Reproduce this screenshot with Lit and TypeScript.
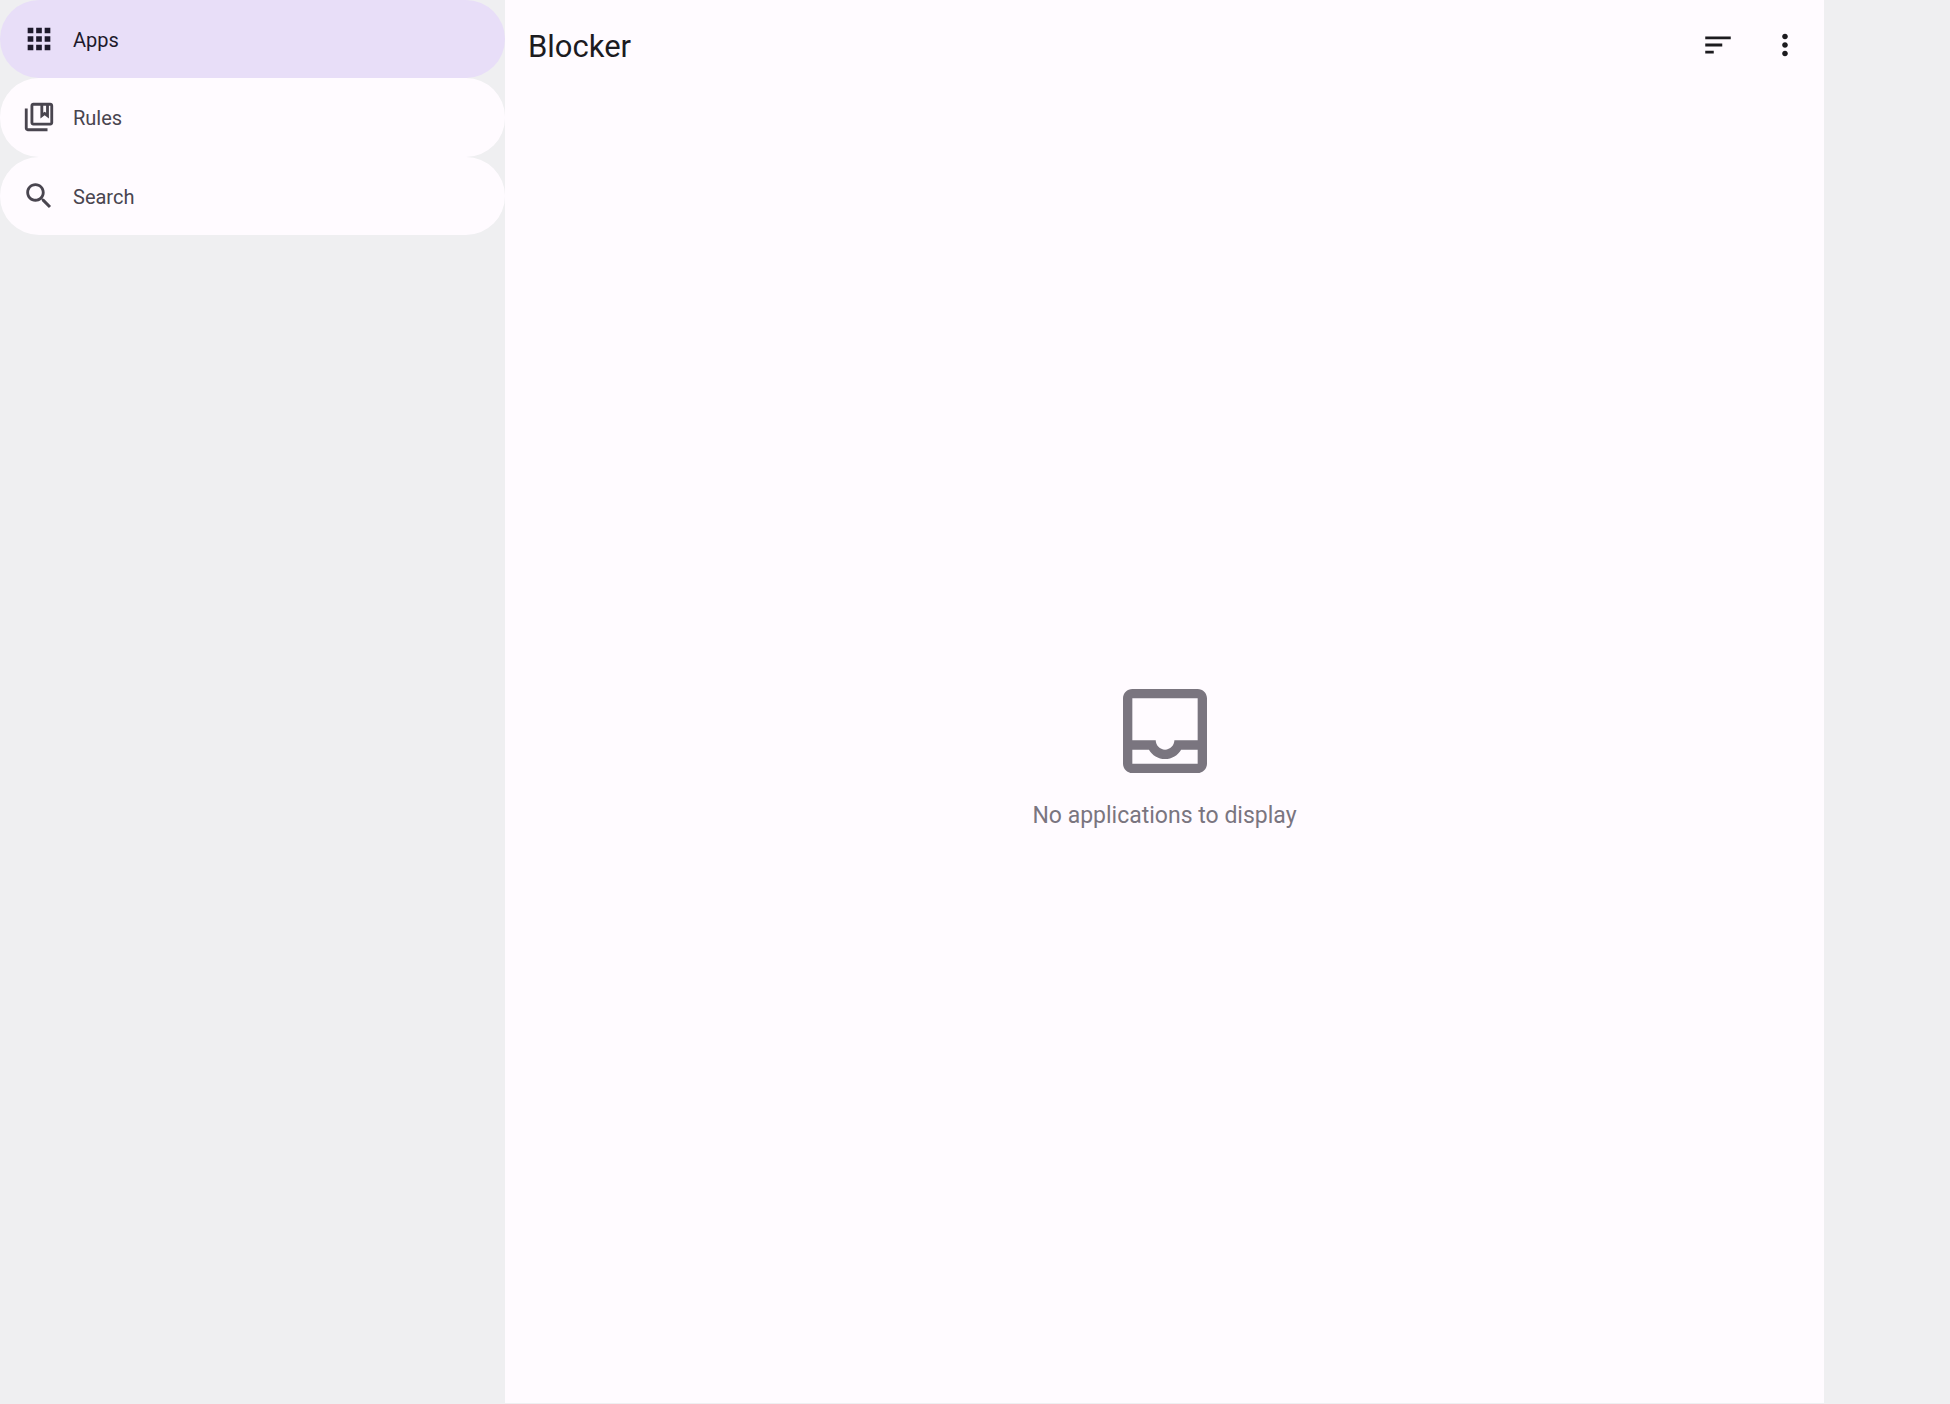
import { LitElement, html, css, svg } from "lit";
import { customElement, state } from "lit/decorators.js";

const icons = {
  apps: svg`<path d="M4 8h4V4H4v4zm6 12h4v-4h-4v4zm-6 0h4v-4H4v4zm0-6h4v-4H4v4zm6 0h4v-4h-4v4zm6-10v4h4V4h-4zm-6 4h4V4h-4v4zm6 6h4v-4h-4v4zm0 6h4v-4h-4v4z"/>`,
  rules: svg`<path d="M4 6H2v14c0 1.100.9 2 2 2h14v-2H4V6z"/><path fill-rule="evenodd" d="M20 2H8c-1.100 0-2 .9-2 2v12c0 1.100.9 2 2 2h12c1.100 0 2-.9 2-2V4c0-1.100-.9-2-2-2zM8 16V4h5v9l3-2.250L19 13V4h1v12H8zM15 4h2v5l-1-.75L15 9V4z"/>`,
  search: svg`<path d="M15.5 14h-.79l-.28-.27C15.410 12.590 16 11.110 16 9.500 16 5.910 13.090 3 9.500 3S3 5.910 3 9.500 5.910 16 9.500 16c1.610 0 3.090-.59 4.230-1.570l.27.28v.79l5 4.990L20.490 19l-4.990-5zm-6 0C7.010 14 5 11.990 5 9.500S7.010 5 9.500 5 14 7.010 14 9.500 11.990 14 9.500 14z"/>`,
  sort: svg`<path d="M3 18h6v-2H3v2zM3 6v2h18V6H3zm0 7h12v-2H3v2z"/>`,
  more: svg`<path d="M12 8c1.100 0 2-.9 2-2s-.9-2-2-2-2 .9-2 2 .9 2 2 2zm0 2c-1.100 0-2 .9-2 2s.9 2 2 2 2-.9 2-2-.9-2-2-2zm0 6c-1.100 0-2 .9-2 2s.9 2 2 2 2-.9 2-2-.9-2-2-2z"/>`,
  inbox: svg`<path d="M19 3H5c-1.100 0-2 .9-2 2v14c0 1.100.9 2 2 2h14c1.100 0 2-.9 2-2V5c0-1.100-.9-2-2-2zm0 16H5v-3h3.560c.69 1.190 1.970 2 3.450 2s2.750-.81 3.450-2H19v3zm0-5h-4.990c0 1.100-.9 2-2 2s-2-.9-2-2H5V5h14v9z"/>`,
};

type IconName = keyof typeof icons;

const icon = (name: IconName) =>
  html`<svg class="icon" viewBox="0 0 24 24" aria-hidden="true">${icons[name]}</svg>`;

const destinations: { name: IconName; label: string }[] = [
  { name: "apps", label: "Apps" },
  { name: "rules", label: "Rules" },
  { name: "search", label: "Search" },
];

@customElement("app-root")
export class AppRoot extends LitElement {
  @state() private selected: IconName = "apps";

  static styles = css`
    :host {
      display: flex;
      min-height: 100vh;
      box-sizing: border-box;
      padding: 0 126px 1px 0;
      background: #efeff1;
      color: #1c1b1f;
      font-family: Roboto, "Liberation Sans", sans-serif;
    }
    button {
      border: 0;
      margin: 0;
      background: none;
      color: inherit;
      font: inherit;
      cursor: pointer;
    }
    .icon {
      display: block;
      flex: none;
      width: 34px;
      height: 34px;
      fill: currentColor;
    }
    .nav {
      flex: 0 0 505px;
      display: grid;
      grid-auto-rows: 1fr;
      align-self: flex-start;
      height: 235px;
    }
    .destination {
      display: flex;
      align-items: center;
      gap: 17px;
      padding: 0 22px;
      border-radius: 39px;
      background: #fffbff;
      color: #49454f;
      font-size: 20px;
      line-height: 28px;
      text-align: left;
    }
    .destination.selected {
      background: #e8def8;
      color: #1d192b;
    }
    .label {
      padding-top: 2px;
    }
    .main {
      flex: 1;
      min-width: 0;
      display: flex;
      flex-direction: column;
      background: #fffbff;
    }
    .bar {
      display: flex;
      align-items: center;
      height: 90px;
      padding: 0 6px 0 23px;
    }
    .title {
      flex: 1;
      margin: 0;
      padding-top: 3px;
      font-size: 31px;
      line-height: 40px;
      font-weight: 400;
    }
    .action {
      display: grid;
      place-items: center;
      width: 67px;
      height: 67px;
      padding: 0;
      border-radius: 50%;
    }
    .empty {
      flex: 1;
      display: flex;
      flex-direction: column;
      align-items: center;
      justify-content: center;
      gap: 12px;
      padding-top: 15px;
      color: #7a757f;
    }
    .empty .icon {
      width: 112px;
      height: 112px;
    }
    .message {
      margin: 0;
      font-size: 23px;
      line-height: 34px;
    }
  `;

  render() {
    return html`
      <nav class="nav" aria-label="Sections">
        ${destinations.map(
          (d) => html`<button
            class="destination ${d.name === this.selected ? "selected" : ""}"
            @click=${() => (this.selected = d.name)}
          >
            ${icon(d.name)}<span class="label">${d.label}</span>
          </button>`,
        )}
      </nav>
      <main class="main">
        <header class="bar">
          <h1 class="title">Blocker</h1>
          <button class="action" aria-label="Sort">${icon("sort")}</button>
          <button class="action" aria-label="More options">${icon("more")}</button>
        </header>
        <section class="empty">
          ${icon("inbox")}
          <p class="message">No applications to display</p>
        </section>
      </main>
    `;
  }
}
